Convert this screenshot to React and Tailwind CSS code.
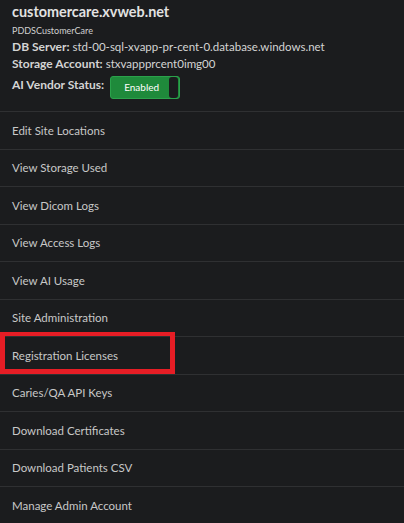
import React from "react";

const menuItems = [
  "Edit Site Locations",
  "View Storage Used",
  "View Dicom Logs",
  "View Access Logs",
  "View AI Usage",
  "Site Administration",
  "Registration Licenses",
  "Caries/QA API Keys",
  "Download Certificates",
  "Download Patients CSV",
  "Manage Admin Account",
];

const App = () => {
  return (
    <div
      className="relative w-[404px] h-[523px] overflow-hidden bg-[#1b1c1e] text-[#d4d4d4]"
      style={{ fontFamily: 'Lato, "Open Sans", sans-serif' }}
    >
      {/* Site info */}
      <div className="px-3 pt-[2px] h-[111px]">
        <div className="text-[14.4px] font-bold leading-[20px] text-[#e2e2e2]">
          customercare.xvweb.net
        </div>
        <div className="text-[9px] leading-[14px] mt-[1.5px] text-[#d0d0d0]">
          PDDSCustomerCare
        </div>
        <div className="text-[11.5px] leading-[17.5px]">
          <span className="text-[12px] font-bold">DB Server:</span>{" "}
          std-00-sql-xvapp-pr-cent-0.database.windows.net
        </div>
        <div className="text-[11.5px] leading-[17.5px]">
          <span className="text-[12px] font-bold">Storage Account:</span>{" "}
          stxvappprcent0img00
        </div>
        <div className="flex items-start gap-[6px] mt-[3.5px]">
          <span className="text-[12px] font-bold leading-[18px]">
            AI Vendor Status:
          </span>
          <div className="flex w-[70px] h-[23px] rounded-[3px] border border-[#2ba24b] bg-[#1f8a3b] overflow-hidden">
            <div className="flex-1 flex items-center justify-center pl-[3px] text-[10px] text-white">
              Enabled
            </div>
            <div className="w-[9px] mr-[1px] rounded-[3px] bg-[#1b1c1e]"></div>
          </div>
        </div>
      </div>

      {/* Menu */}
      <div className="flex flex-col">
        {menuItems.map((item) => (
          <div
            key={item}
            className="h-[37.5px] flex items-center px-3 border-t border-[#2f3032] text-[11.5px] text-[#c8c8c8]"
          >
            {item}
          </div>
        ))}
      </div>

      {/* Highlight box */}
      <div className="absolute left-0 top-[332px] w-[175px] h-[42px] border-[5px] border-t-[4px] border-[#e61d25]"></div>
    </div>
  );
};

export default App;
